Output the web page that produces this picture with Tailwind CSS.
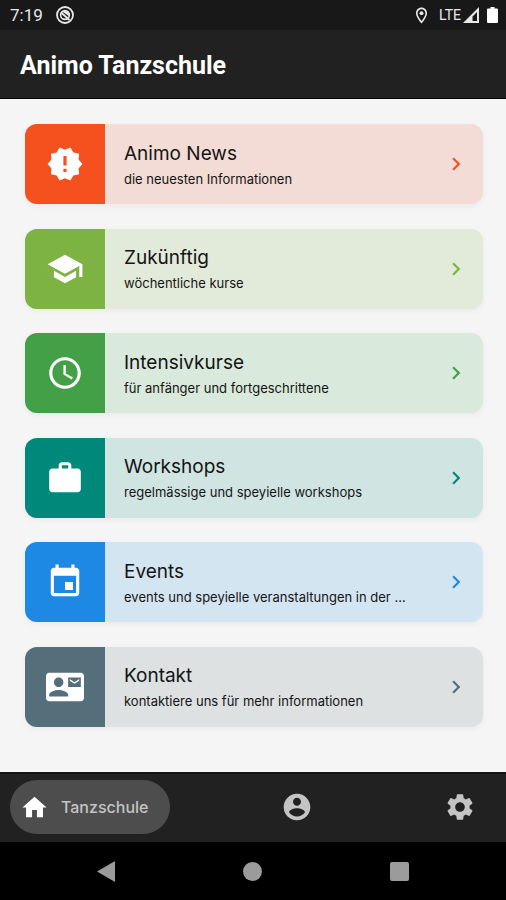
<!DOCTYPE html>
<html lang="de">
<head>
    <meta charset="UTF-8">
    <meta name="viewport" content="width=device-width, initial-scale=1.0">
    <title>Animo Tanzschule</title>
    <script src="https://cdn.jsdelivr.net/npm/@tailwindcss/browser@4"></script>
</head>
<body class="flex min-h-screen flex-col bg-[#f5f5f5] font-['Inter',sans-serif] text-[#141414]">

    <!-- Status bar -->
    <div class="flex h-[30px] items-center justify-between bg-[#181818] pr-2 pl-[10px] font-['Roboto',sans-serif] text-[#e8e8e8]">
        <div class="flex items-center gap-3">
            <span class="text-[17px] leading-none">7:19</span>
            <svg class="size-5" viewBox="0 0 20 20" fill="none" stroke="currentColor">
                <circle cx="10" cy="10" r="8" stroke-width="1.800"/>
                <circle cx="10" cy="10" r="4.400" stroke-width="1.600"/>
                <path d="M6 7.500l8.500 7.500" stroke-width="1.800"/>
                <path d="M7 6.500c4-2 7.500 0 7.500 5z" fill="currentColor" stroke="none"/>
            </svg>
        </div>
        <div class="flex items-center">
            <svg class="mr-2 size-[19px]" viewBox="0 0 24 24" fill="currentColor"><path d="M12 2C8.130 2 5 5.130 5 9c0 5.250 7 13 7 13s7-7.750 7-13c0-3.870-3.130-7-7-7zM7 9c0-2.760 2.240-5 5-5s5 2.240 5 5c0 2.880-2.880 7.190-5 9.880C9.920 16.210 7 11.850 7 9z"/><circle cx="12" cy="9" r="2.500"/></svg>
            <span class="text-sm leading-none">LTE</span>
            <svg class="mr-2 ml-[2px] size-4" viewBox="0 0 16 16" fill="currentColor"><path fill-rule="evenodd" d="M16 0v16H0zM14 5l-4.500 4.500V14H14z"/></svg>
            <svg class="h-4 w-[11px]" viewBox="0 0 11 16" fill="#fff"><path d="M3.500 0h4v1.500H10a1 1 0 0 1 1 1V15a1 1 0 0 1-1 1H1a1 1 0 0 1-1-1V2.500a1 1 0 0 1 1-1h2.500z"/></svg>
        </div>
    </div>

    <header class="flex h-[69px] items-center border-b border-black bg-[#212121] px-5 pt-[3px]">
        <h1 class="font-['Roboto',sans-serif] text-[25px] font-bold text-white">Animo Tanzschule</h1>
    </header>

    <!-- Menu -->
    <main class="flex flex-1 flex-col justify-between gap-4 pt-[25px] pr-[23px] pb-[45px] pl-[25px]">
        <a href="#news" class="flex h-20 overflow-hidden rounded-xl bg-[#f3dcd5] shadow-[0_2px_6px_rgba(0,0,0,0.05)]">
            <div class="flex w-20 shrink-0 items-center justify-center bg-[#f4511e] text-white">
                <svg class="size-[38px]" viewBox="0 0 24 24" fill="currentColor"><path d="M23 12l-2.440-2.780.340-3.680-3.610-.820-1.890-3.180L12 3 8.600 1.540 6.710 4.720l-3.610.810.340 3.680L1 12l2.440 2.780-.340 3.690 3.610.820 1.890 3.180L12 21l3.400 1.460 1.890-3.180 3.610-.820-.340-3.680L23 12zm-10 5h-2v-2h2v2zm0-4h-2V7h2v6z"/></svg>
            </div>
            <div class="flex min-w-0 flex-1 flex-col justify-center pt-[3px] pl-[19px]">
                <h2 class="text-[19px] leading-[26px]">Animo News</h2>
                <p class="truncate text-[13px] leading-6">die neuesten Informationen</p>
            </div>
            <svg class="mr-[14px] size-[26px] shrink-0 self-center text-[#f4511e]" viewBox="0 0 24 24" fill="currentColor"><path d="M10 6L8.590 7.410 13.170 12l-4.580 4.590L10 18l6-6z"/></svg>
        </a>

        <a href="#zukuenftig" class="flex h-20 overflow-hidden rounded-xl bg-[#e2ebd9] shadow-[0_2px_6px_rgba(0,0,0,0.05)]">
            <div class="flex w-20 shrink-0 items-center justify-center bg-[#7cb342] text-white">
                <svg class="size-[38px]" viewBox="0 0 24 24" fill="currentColor"><path d="M5 13.180v4L12 21l7-3.820v-4L12 17l-7-3.820zM12 3L1 9l11 6 9-4.910V17h2V9L12 3z"/></svg>
            </div>
            <div class="flex min-w-0 flex-1 flex-col justify-center pt-[3px] pl-[19px]">
                <h2 class="text-[19px] leading-[26px]">Zukünftig</h2>
                <p class="truncate text-[13px] leading-6">wöchentliche kurse</p>
            </div>
            <svg class="mr-[14px] size-[26px] shrink-0 self-center text-[#7cb342]" viewBox="0 0 24 24" fill="currentColor"><path d="M10 6L8.590 7.410 13.170 12l-4.580 4.590L10 18l6-6z"/></svg>
        </a>

        <a href="#intensivkurse" class="flex h-20 overflow-hidden rounded-xl bg-[#d9e9db] shadow-[0_2px_6px_rgba(0,0,0,0.05)]">
            <div class="flex w-20 shrink-0 items-center justify-center bg-[#43a047] text-white">
                <svg class="size-[38px]" viewBox="0 0 24 24" fill="currentColor"><path d="M11.990 2C6.470 2 2 6.480 2 12s4.470 10 9.990 10C17.520 22 22 17.520 22 12S17.520 2 11.990 2zM12 20c-4.420 0-8-3.580-8-8s3.580-8 8-8 8 3.580 8 8-3.580 8-8 8zm.500-13H11v6l5.250 3.150.750-1.230-4.500-2.670z"/></svg>
            </div>
            <div class="flex min-w-0 flex-1 flex-col justify-center pt-[3px] pl-[19px]">
                <h2 class="text-[19px] leading-[26px]">Intensivkurse</h2>
                <p class="truncate text-[13px] leading-6">für anfänger und fortgeschrittene</p>
            </div>
            <svg class="mr-[14px] size-[26px] shrink-0 self-center text-[#43a047]" viewBox="0 0 24 24" fill="currentColor"><path d="M10 6L8.590 7.410 13.170 12l-4.580 4.590L10 18l6-6z"/></svg>
        </a>

        <a href="#workshops" class="flex h-20 overflow-hidden rounded-xl bg-[#d0e5e2] shadow-[0_2px_6px_rgba(0,0,0,0.05)]">
            <div class="flex w-20 shrink-0 items-center justify-center bg-[#00897b] text-white">
                <svg class="size-[38px]" viewBox="0 0 24 24" fill="currentColor"><path d="M20 6h-4V4c0-1.110-.890-2-2-2h-4c-1.110 0-2 .890-2 2v2H4c-1.110 0-1.990.890-1.990 2L2 19c0 1.110.890 2 2 2h16c1.110 0 2-.890 2-2V8c0-1.110-.890-2-2-2zm-6 0h-4V4h4v2z"/></svg>
            </div>
            <div class="flex min-w-0 flex-1 flex-col justify-center pt-[3px] pl-[19px]">
                <h2 class="text-[19px] leading-[26px]">Workshops</h2>
                <p class="truncate text-[13px] leading-6">regelmässige und speyielle workshops</p>
            </div>
            <svg class="mr-[14px] size-[26px] shrink-0 self-center text-[#00897b]" viewBox="0 0 24 24" fill="currentColor"><path d="M10 6L8.590 7.410 13.170 12l-4.580 4.590L10 18l6-6z"/></svg>
        </a>

        <a href="#events" class="flex h-20 overflow-hidden rounded-xl bg-[#d4e5f2] shadow-[0_2px_6px_rgba(0,0,0,0.05)]">
            <div class="flex w-20 shrink-0 items-center justify-center bg-[#1e88e5] text-white">
                <svg class="size-[38px]" viewBox="0 0 24 24" fill="currentColor"><path d="M17 12h-5v5h5v-5zM16 1v2H8V1H6v2H5c-1.110 0-1.990.900-1.990 2L3 19c0 1.100.890 2 2 2h14c1.100 0 2-.900 2-2V5c0-1.100-.900-2-2-2h-1V1h-2zm3 18H5V8h14v11z"/></svg>
            </div>
            <div class="flex min-w-0 flex-1 flex-col justify-center pt-[3px] pl-[19px]">
                <h2 class="text-[19px] leading-[26px]">Events</h2>
                <p class="truncate text-[13px] leading-6">events und speyielle veranstaltungen in der …</p>
            </div>
            <svg class="mr-[14px] size-[26px] shrink-0 self-center text-[#1e88e5]" viewBox="0 0 24 24" fill="currentColor"><path d="M10 6L8.590 7.410 13.170 12l-4.580 4.590L10 18l6-6z"/></svg>
        </a>

        <a href="#kontakt" class="flex h-20 overflow-hidden rounded-xl bg-[#dde1e2] shadow-[0_2px_6px_rgba(0,0,0,0.05)]">
            <div class="flex w-20 shrink-0 items-center justify-center bg-[#546e7a] text-white">
                <svg class="size-[38px]" viewBox="0 0 24 24" fill="currentColor"><path d="M21 8V7l-3 2-3-2v1l3 2 3-2zm1-5H2C.900 3 0 3.900 0 5v14c0 1.100.900 2 2 2h20c1.100 0 1.990-.900 1.990-2L24 5c0-1.100-.900-2-2-2zM8 6c1.660 0 3 1.340 3 3s-1.340 3-3 3-3-1.340-3-3 1.340-3 3-3zm6 12H2v-1c0-2 4-3.100 6-3.100s6 1.100 6 3.100v1zm8-6h-8V6h8v6z"/></svg>
            </div>
            <div class="flex min-w-0 flex-1 flex-col justify-center pt-[3px] pl-[19px]">
                <h2 class="text-[19px] leading-[26px]">Kontakt</h2>
                <p class="truncate text-[13px] leading-6">kontaktiere uns für mehr informationen</p>
            </div>
            <svg class="mr-[14px] size-[26px] shrink-0 self-center text-[#546e7a]" viewBox="0 0 24 24" fill="currentColor"><path d="M10 6L8.590 7.410 13.170 12l-4.580 4.590L10 18l6-6z"/></svg>
        </a>
    </main>

    <!-- Tabs -->
    <nav class="flex h-[70px] items-center justify-between border-t-2 border-[#141414] bg-[#212121] px-[10px] pb-[2px] text-[#c4c4c4]">
        <button type="button" class="flex h-[54px] w-40 items-center gap-3 rounded-full bg-[#4d4d4d] pl-[10px]">
            <svg class="size-[29px] text-white" viewBox="0 0 24 24" fill="currentColor"><path d="M10 20v-6h4v6h5v-8h3L12 3 2 12h3v8z"/></svg>
            <span class="text-base font-medium">Tanzschule</span>
        </button>
        <button type="button" aria-label="Profil" class="flex h-[54px] w-[72px] items-center justify-center">
            <svg class="size-8" viewBox="0 0 24 24" fill="currentColor"><path d="M12 2C6.480 2 2 6.480 2 12s4.480 10 10 10 10-4.480 10-10S17.520 2 12 2zm0 3c1.660 0 3 1.340 3 3s-1.340 3-3 3-3-1.340-3-3 1.340-3 3-3zm0 14.200c-2.500 0-4.710-1.280-6-3.220.030-1.990 4-3.080 6-3.080 1.990 0 5.970 1.090 6 3.080-1.290 1.940-3.500 3.220-6 3.220z"/></svg>
        </button>
        <button type="button" aria-label="Einstellungen" class="flex h-[54px] w-[72px] items-center justify-center">
            <svg class="size-8" viewBox="0 0 24 24" fill="currentColor"><path d="M19.140 12.940c.040-.300.060-.610.060-.940 0-.320-.020-.640-.070-.940l2.030-1.580c.180-.140.230-.410.120-.610l-1.920-3.320c-.120-.220-.370-.290-.590-.220l-2.390.960c-.500-.380-1.030-.700-1.620-.940l-.360-2.540c-.040-.240-.240-.410-.480-.410h-3.840c-.240 0-.430.170-.470.410l-.360 2.540c-.590.240-1.130.570-1.620.940l-2.390-.960c-.220-.080-.470 0-.590.220L2.740 8.870c-.120.210-.080.470.120.610l2.030 1.580c-.050.300-.090.630-.090.940s.020.640.070.940l-2.030 1.580c-.180.140-.230.410-.120.610l1.920 3.320c.120.220.370.290.590.220l2.390-.960c.500.380 1.030.700 1.620.940l.360 2.540c.050.240.240.410.480.410h3.840c.240 0 .440-.170.470-.410l.360-2.540c.590-.240 1.130-.560 1.620-.940l2.390.960c.220.080.470 0 .590-.220l1.920-3.320c.120-.220.070-.470-.120-.610l-2.010-1.580zM12 15.600c-1.980 0-3.600-1.620-3.600-3.600s1.620-3.600 3.600-3.600 3.600 1.620 3.600 3.600-1.620 3.600-3.600 3.600z"/></svg>
        </button>
    </nav>

    <!-- System keys -->
    <div class="grid h-[58px] grid-cols-3 bg-black px-[33px] text-[#9b9b9b]">
        <button type="button" aria-label="Zurück" class="flex items-center justify-center">
            <svg class="h-[21px] w-[18px]" viewBox="0 0 18 21" fill="currentColor"><path d="M18 0v21L0 10.500z"/></svg>
        </button>
        <button type="button" aria-label="Startbildschirm" class="flex items-center justify-center">
            <span class="size-[19px] rounded-full bg-[#9b9b9b]"></span>
        </button>
        <button type="button" aria-label="Übersicht" class="flex items-center justify-center">
            <span class="size-[19px] rounded-[2px] bg-[#9b9b9b]"></span>
        </button>
    </div>

</body>
</html>
